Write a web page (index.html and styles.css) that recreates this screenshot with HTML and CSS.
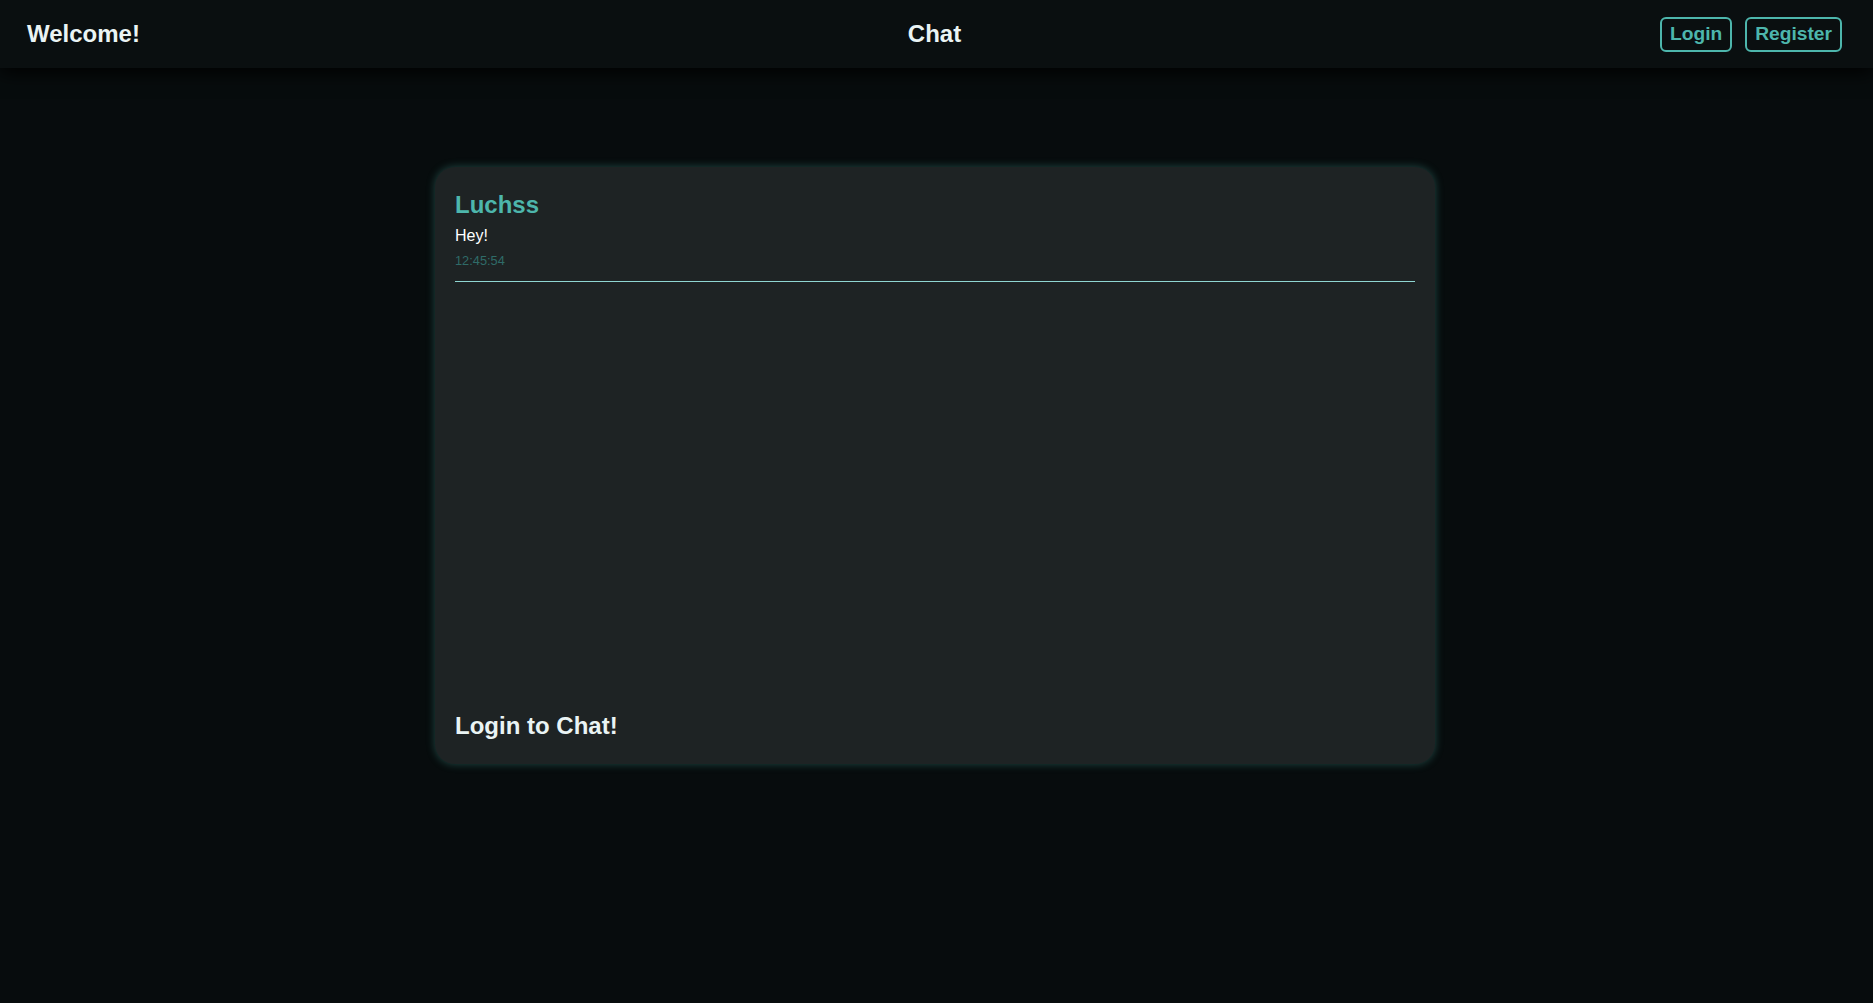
FILE: index.html
```html
<!DOCTYPE html>
<html lang="en">
<head>
<meta charset="utf-8">
<title>Chat</title>
<link rel="stylesheet" href="styles.css">
</head>
<body>
<header class="topbar">
  <div class="brand">Welcome!</div>
  <div class="title">Chat</div>
  <nav class="actions">
    <button class="btn">Login</button>
    <button class="btn">Register</button>
  </nav>
</header>
<main class="page">
  <section class="card">
    <div class="messages">
      <article class="message">
        <h3 class="author">Luchss</h3>
        <p class="text">Hey!</p>
        <span class="time">12:45:54</span>
      </article>
    </div>
    <h2 class="prompt">Login to Chat!</h2>
  </section>
</main>
</body>
</html>
```
FILE: styles.css
```css
html, body {
  margin: 0;
  padding: 0;
}
body {
  background: #070c0d;
  font-family: "Liberation Sans", Arial, sans-serif;
  color: #eaf4f4;
  min-height: 100vh;
}
.topbar {
  height: 68px;
  box-sizing: border-box;
  background: #0a0f10;
  display: grid;
  grid-template-columns: 1fr auto 1fr;
  align-items: center;
  padding: 0 31px 0 27px;
  box-shadow: 0 4px 18px #000;
  position: relative;
}
.brand, .title {
  font-size: 24px;
  font-weight: bold;
  color: #eaf4f4;
}
.actions {
  justify-self: end;
  display: flex;
  gap: 13px;
}
.btn {
  font-family: "Liberation Sans", Arial, sans-serif;
  font-size: 19.2px;
  font-weight: bold;
  color: #4db6ac;
  background: transparent;
  border: 2px solid #4db6ac;
  border-radius: 6px;
  padding: 4px 8px 6px;
  line-height: 21px;
  cursor: pointer;
}
.page {
  padding: 99px 3px 0 0;
}
.card {
  width: 1000px;
  height: 597px;
  box-sizing: border-box;
  margin: 0 auto;
  padding: 20px;
  background: #1e2324;
  border-radius: 20px;
  box-shadow: 0 0 8px rgba(77, 182, 172, 0.35);
  display: flex;
  flex-direction: column;
}
.messages {
  flex: 1;
}
.message {
  padding-top: 4px;
  padding-bottom: 13px;
  border-bottom: 1px solid #8fd6d2;
}
.author {
  margin: 0;
  font-size: 24px;
  font-weight: bold;
  color: #4db6ac;
}
.text {
  margin: 8px 0 0;
  font-size: 16px;
  color: #ffffff;
}
.time {
  display: block;
  margin-top: 8px;
  font-size: 12.8px;
  color: #2f6b68;
}
.prompt {
  margin: 0 0 4px;
  font-size: 24px;
  font-weight: bold;
  color: #eaf4f4;
}
```
